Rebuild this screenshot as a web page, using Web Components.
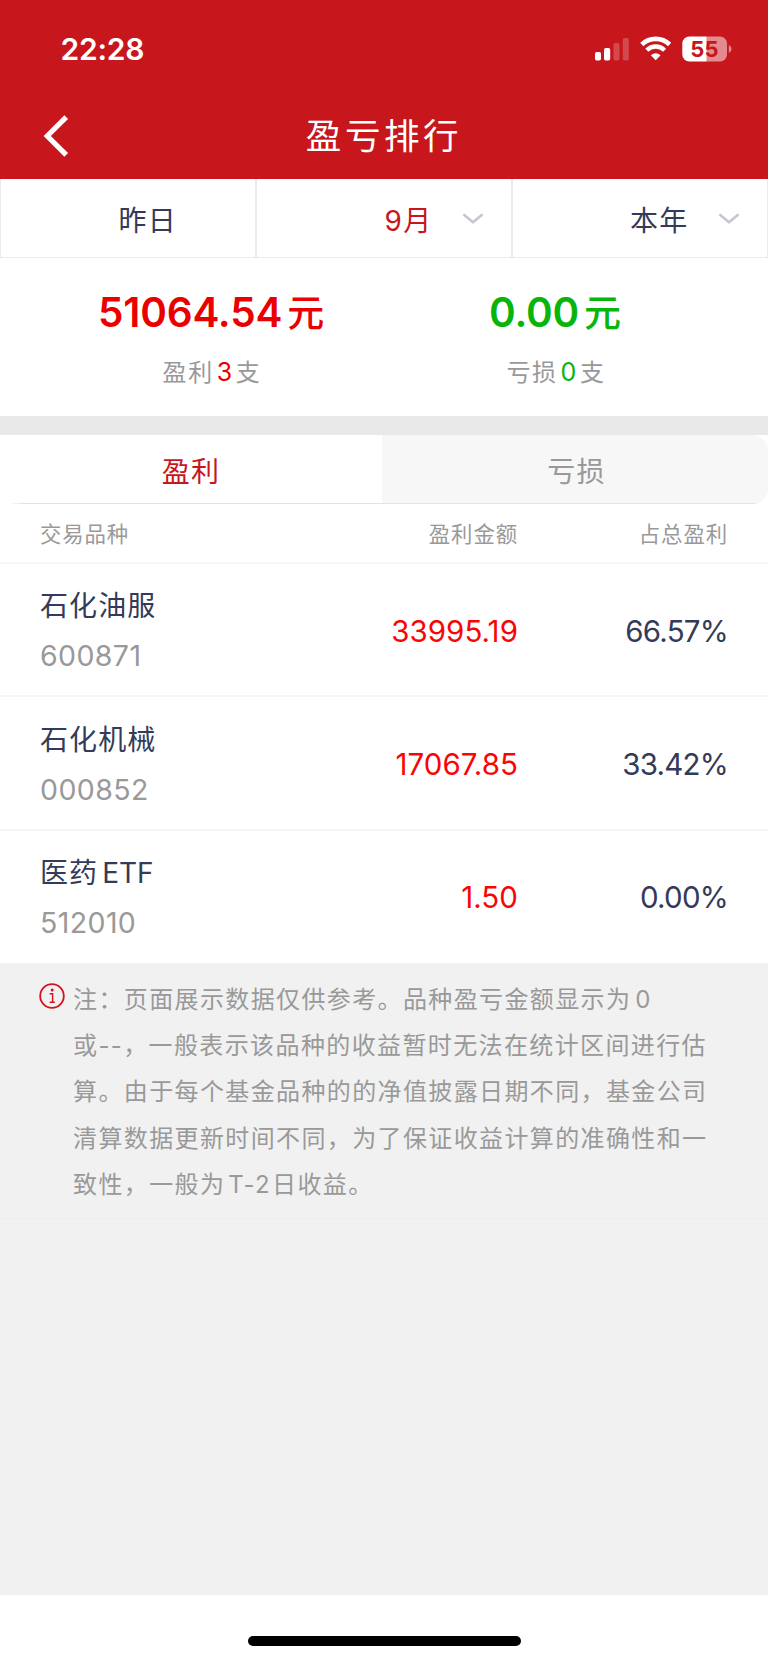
<!DOCTYPE html>
<html lang="zh-CN">
<head>
<meta charset="utf-8">
<title>盈亏排行</title>
<style>
    body {
        margin: 0;
        background: #f1f1f1;
        color: #343a58;
        font-family: Inter, "Noto Sans CJK SC", sans-serif;
    }
</style>
</head>
<body>
<ranking-page></ranking-page>

<script>
class BaseView extends HTMLElement {
    constructor() {
        super();
        this.root = this.attachShadow({ mode: "open" });
        this.root.innerHTML = this.render();
    }
}

class StatusBar extends BaseView {
    render() {
        return `
            <style>
                :host {
                    display: flex;
                    justify-content: space-between;
                    height: 98px;
                    padding: 0 36px 0 60.5px;
                    align-items: center;
                    color: white;
                }
                .time { font-size: 30px; font-weight: 600; letter-spacing: -.2px; }
                .icons { display: flex; align-items: center; }
                svg { display: block; }
                text { font-family: Inter, sans-serif; font-weight: 700; font-size: 22px; fill: #c7161c; }
            </style>
            <span class="time">22:28</span>
            <div class="icons">
                <svg width="137" height="26" viewBox="0 0 137 26" fill="white">
                    <rect x="0" y="16" width="6" height="8.5" rx="1.7"/>
                    <rect x="9" y="12" width="6.2" height="12.5" rx="1.7"/>
                    <rect x="18.5" y="7" width="6" height="17.5" rx="1.7" opacity=".22"/>
                    <rect x="27.8" y="2" width="6" height="22.5" rx="1.7" opacity=".22"/>
                    <path d="M46.8 8.5 A20 20 0 0 1 74.6 8.5" fill="none" stroke="white" stroke-width="4.6"/>
                    <path d="M51.8 14.2 A12.7 12.7 0 0 1 69.6 14.2" fill="none" stroke="white" stroke-width="4.4"/>
                    <path d="M55.8 19.2 Q60.7 15.4 65.6 19.2 L60.7 24.2 Z"/>
                    <path d="M111.7 .5 H125 a7 7 0 0 1 7 7 v11 a7 7 0 0 1 -7 7 H111.7 Z" opacity=".5"/>
                    <path d="M111.7 .5 H94.3 a7 7 0 0 0 -7 7 v11 a7 7 0 0 0 7 7 H111.7 Z"/>
                    <path d="M133.8 9 q2.8 1.4 2.8 4 t-2.8 4 Z" opacity=".5"/>
                    <text x="109.4" y="21" text-anchor="middle">55</text>
                </svg>
            </div>
        `;
    }
}

class NavBar extends BaseView {
    render() {
        return `
            <style>
                :host {
                    display: grid;
                    grid-template-columns: 120px 1fr 120px;
                    height: 76px;
                    align-items: center;
                    color: white;
                    font-size: 35.5px;
                    line-height: 44px;
                    letter-spacing: 3.6px;
                    text-align: center;
                }
                svg { display: block; margin-left: 42px; }
                .title { padding-top: 1px; }
            </style>
            <svg width="30" height="44" viewBox="0 0 30 44" fill="none" stroke="white" stroke-width="5.2">
                <path d="M24.2 3.2 L5.3 22 L24.2 40.8"/>
            </svg>
            <div class="title"><slot></slot></div>
        `;
    }
}

class FilterTab extends BaseView {
    render() {
        return `
            <style>
                :host {
                    box-sizing: border-box;
                    display: flex;
                    align-items: center;
                    justify-content: flex-end;
                    border: 1px solid #ebebeb;
                    border-top: none;
                    font-size: 28px;
                    letter-spacing: 1.3px;
                    padding-top: 1px;
                    padding-right: 27.5px;
                }
                :host([active]) { color: #c7161c; }
                :host([plain]) { padding-right: 78px; }
                :host([plain]) svg { display: none; }
                svg { margin-left: 29px; }
            </style>
            <slot></slot>
            <svg width="22" height="12" viewBox="0 0 22 12" fill="none" stroke="#c6c6ce" stroke-width="2.6" stroke-linecap="round" stroke-linejoin="round">
                <path d="M2.3 2 L11 9.3 L19.7 2"/>
            </svg>
        `;
    }
}

class SummaryFigure extends BaseView {
    render() {
        return `
            <style>
                :host { display: block; text-align: center; white-space: nowrap; padding-top: 30px; }
                .total { font-size: 40.5px; line-height: 50px; font-weight: 600; letter-spacing: -.2px; color: var(--tone); }
                .total .unit { font-size: 37px; font-weight: 500; margin-left: 5px; margin-right: 2px; }
                .count { margin-top: 16px; font-size: 24px; line-height: 34px; letter-spacing: 1.6px; color: #999; }
                ::slotted(b) { font-weight: 400; color: var(--tone); margin: 0 2px 0 3px; font-size: 25px; }
            </style>
            <div class="total"><slot name="amount"></slot><span class="unit">元</span></div>
            <div class="count"><slot></slot></div>
        `;
    }
}

class SegmentTab extends BaseView {
    render() {
        return `
            <style>
                :host {
                    box-sizing: border-box;
                    display: flex;
                    align-items: center;
                    justify-content: center;
                    font-size: 28px;
                    letter-spacing: 1.3px;
                    padding-top: 1px;
                    padding-left: 3px;
                    color: #999;
                    background: linear-gradient(#e3e3e3, #e3e3e3) 0 100% / 100% 1px no-repeat #f7f7f7;
                    border-radius: 0 16px 16px 0;
                }
                :host([active]) {
                    color: #c7161c;
                    background: linear-gradient(to right, white, #e3e3e3 14px) 9px 100% / 100% 1px no-repeat white;
                    border-radius: 0;
                    padding-left: 0;
                }
            </style>
            <slot></slot>
        `;
    }
}

class PositionRow extends BaseView {
    render() {
        return `
            <style>
                :host {
                    box-sizing: border-box;
                    display: grid;
                    grid-template-columns: 240px 238px 1fr;
                    align-items: center;
                    height: 133.4px;
                    padding: 2px 40px 0;
                    border-top: 2px solid #f6f6f6;
                    font-size: 29.5px;
                    white-space: nowrap;
                }
                .name { font-size: 28px; line-height: 50px; letter-spacing: 1.1px; padding-top: 1px; }
                .code { font-size: 28.5px; line-height: 50px; letter-spacing: .4px; color: #999; }
                .profit { color: #fa0505; letter-spacing: .05px; }
                .profit, .share { text-align: right; }
                .share { letter-spacing: -.75px; }
            </style>
            <div>
                <div class="name"><slot name="name"></slot></div>
                <div class="code"><slot name="code"></slot></div>
            </div>
            <div class="profit"><slot name="profit"></slot></div>
            <div class="share"><slot name="share"></slot></div>
        `;
    }
}

class NoteBox extends BaseView {
    render() {
        return `
            <style>
                :host {
                    box-sizing: border-box;
                    display: flex;
                    height: 256px;
                    padding: 14px 0 0 39px;
                    border-bottom: 1px solid #ededed;
                    font-size: 24px;
                    line-height: 46.25px;
                    letter-spacing: 1.38px;
                    color: #999;
                    white-space: nowrap;
                }
                svg { flex: none; margin: 6px 8px 0 0; }
            </style>
            <svg width="26" height="26" viewBox="0 0 26 26">
                <circle cx="13" cy="13" r="11.8" fill="none" stroke="#d3121c" stroke-width="1.8"/>
                <circle cx="13.2" cy="6.9" r="1.5" fill="#d3121c"/>
                <path d="M10.7 10.8 H13.6 V19.3 M10.7 19.3 H15.8" fill="none" stroke="#d3121c" stroke-width="1.4"/>
            </svg>
            <div><slot></slot></div>
        `;
    }
}

class RankingPage extends BaseView {
    render() {
        return `
            <style>
                :host { display: flex; flex-direction: column; height: 1663px; overflow: hidden; }
                header { background: #c7161c; height: 179.4px; }
                .filters { display: grid; grid-template-columns: repeat(3, 1fr); height: 79px; background: white; }
                .summary {
                    display: grid;
                    grid-template-columns: 1fr 1fr;
                    height: 157.6px;
                    box-sizing: border-box;
                    padding: 0 40px;
                    background: white;
                }
                .band { height: 19px; background: #e9e9e9; }
                .tabs { display: grid; grid-template-columns: 382px 1fr; height: 69px; background: white; }
                .head {
                    display: grid;
                    grid-template-columns: 240px 238px 1fr;
                    height: 58px;
                    padding: 0 40px;
                    align-items: center;
                    background: white;
                    color: #999;
                    font-size: 21.4px;
                    letter-spacing: .9px;
                }
                .head .num { text-align: right; }
                .list { background: white; padding-bottom: .8px; }
                footer {
                    margin-top: auto;
                    height: 68px;
                    box-sizing: border-box;
                    padding-top: 41px;
                    background: white;
                }
                .home { width: 273px; height: 10px; margin: 0 auto; border-radius: 5px; background: black; }
                .tight { letter-spacing: 0; margin-left: 4px; }
                .tsp { margin: 0 1px 0 3px; }
            </style>
            <header>
                <status-bar></status-bar>
                <nav-bar>盈亏排行</nav-bar>
            </header>
            <div class="filters">
                <filter-tab plain>昨日</filter-tab>
                <filter-tab active>9月</filter-tab>
                <filter-tab>本年</filter-tab>
            </div>
            <div class="summary">
                <summary-figure style="--tone: #eb0000"><span slot="amount">51064.54</span>盈利<b>3</b>支</summary-figure>
                <summary-figure style="--tone: #08b50b"><span slot="amount">0.00</span>亏损<b>0</b>支</summary-figure>
            </div>
            <div class="band"></div>
            <div class="tabs">
                <segment-tab active>盈利</segment-tab>
                <segment-tab>亏损</segment-tab>
            </div>
            <div class="head">
                <span>交易品种</span>
                <span class="num">盈利金额</span>
                <span class="num">占总盈利</span>
            </div>
            <div class="list">
                <position-row>
                    <span slot="name">石化油服</span><span slot="code">600871</span>
                    <span slot="profit">33995.19</span><span slot="share">66.57%</span>
                </position-row>
                <position-row>
                    <span slot="name">石化机械</span><span slot="code">000852</span>
                    <span slot="profit">17067.85</span><span slot="share">33.42%</span>
                </position-row>
                <position-row>
                    <span slot="name">医药<span class="tight">ETF</span></span><span slot="code">512010</span>
                    <span slot="profit">1.50</span><span slot="share">0.00%</span>
                </position-row>
            </div>
            <note-box>注：页面展示数据仅供参考。品种盈亏金额显示为<span class="tight">0</span><br>或--，一般表示该品种的收益暂时无法在统计区间进行估<br>算。由于每个基金品种的的净值披露日期不同，基金公司<br>清算数据更新时间不同，为了保证收益计算的准确性和一<br>致性，一般为<span class="tsp">T-2</span>日收益。</note-box>
            <footer><div class="home"></div></footer>
        `;
    }
}

customElements.define("status-bar", StatusBar);
customElements.define("nav-bar", NavBar);
customElements.define("filter-tab", FilterTab);
customElements.define("summary-figure", SummaryFigure);
customElements.define("segment-tab", SegmentTab);
customElements.define("position-row", PositionRow);
customElements.define("note-box", NoteBox);
customElements.define("ranking-page", RankingPage);
</script>
</body>
</html>
